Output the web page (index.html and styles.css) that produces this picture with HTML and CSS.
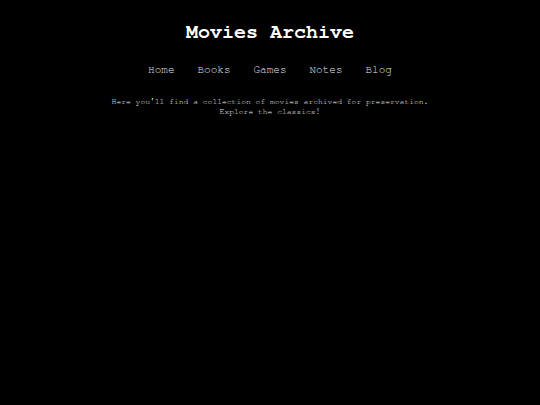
FILE: index.html
```html
<!DOCTYPE html>
<html lang="en">
<head>
<meta charset="utf-8">
<title>Movies Archive</title>
<link rel="stylesheet" href="styles.css">
</head>
<body>
<header class="site-header">
  <h1 class="site-title">Movies Archive</h1>
  <nav class="site-nav">
    <a href="#">Home</a>
    <a href="#">Books</a>
    <a href="#">Games</a>
    <a href="#">Notes</a>
    <a href="#">Blog</a>
  </nav>
</header>
<main class="content">
  <p class="intro">Here you'll find a collection of movies archived for preservation.<br>Explore the classics!</p>
</main>
</body>
</html>
```
FILE: styles.css
```css
html, body {
  margin: 0;
  padding: 0;
  background: #000;
  height: 100%;
}
body {
  font-family: "FreeMono", "Courier New", "Liberation Mono", monospace;
  color: #ccc;
}
.site-header {
  padding-top: 20px;
  text-align: center;
}
.site-title {
  margin: 0;
  font-size: 20px;
  line-height: 24px;
  font-weight: bold;
  color: #fff;
}
.site-nav {
  margin-top: 19px;
  display: flex;
  justify-content: center;
  gap: 23px;
  font-size: 11px;
  line-height: 14px;
}
.site-nav a {
  color: #e6e6e6;
  text-decoration: none;
}
.content {
  text-align: center;
}
.intro {
  margin: 20px 0 0;
  font-size: 8px;
  line-height: 10px;
  color: #eeeeee;
}
```
